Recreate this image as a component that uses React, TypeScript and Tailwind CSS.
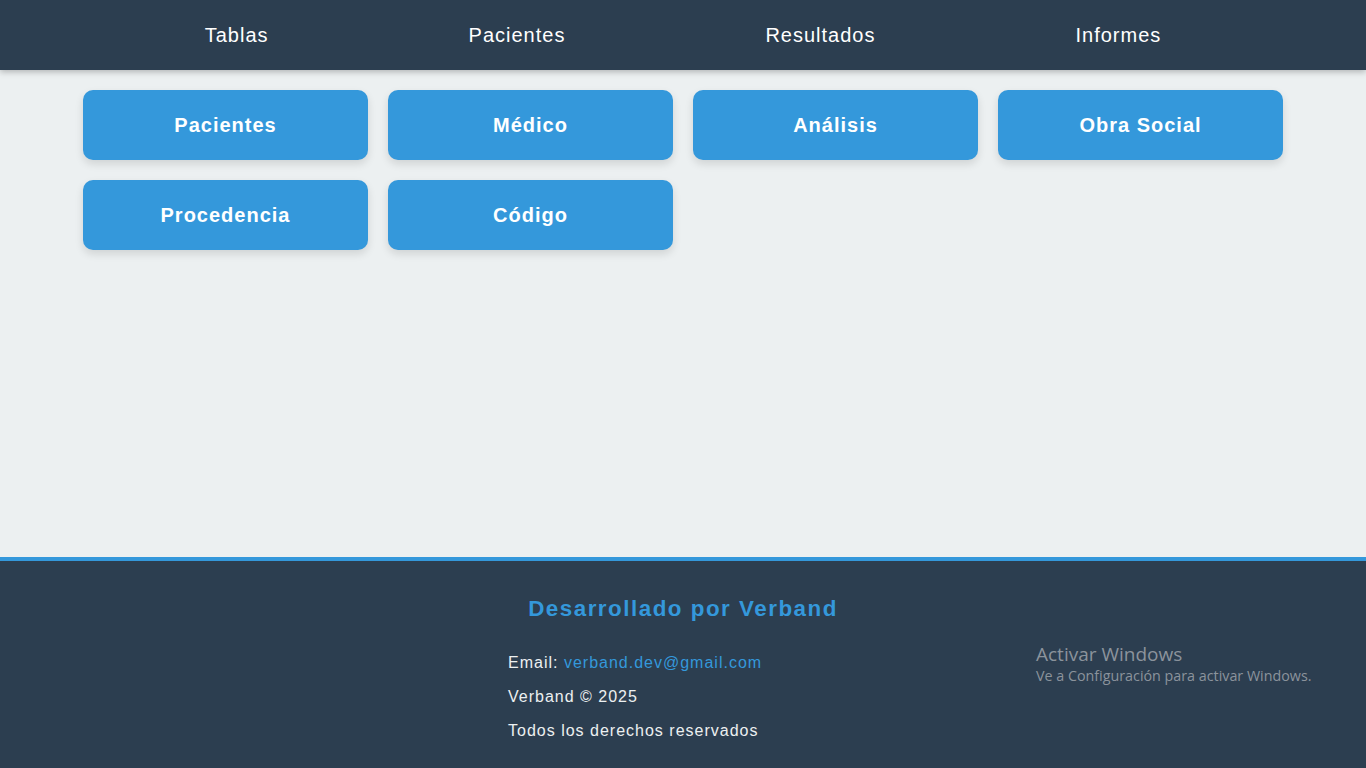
import React from 'react';

const navItems = ['Tablas', 'Pacientes', 'Resultados', 'Informes'];
const tablas = ['Pacientes', 'Médico', 'Análisis', 'Obra Social', 'Procedencia', 'Código'];

const App = () => {
  return (
    <div className="min-h-screen bg-[#ecf0f1] font-['Liberation_Sans',Arial,sans-serif] relative">
      <header className="h-[70px] bg-[#2c3e50] shadow-[0_2px_6px_rgba(0,0,0,0.25)] relative z-10">
        <ul className="h-full flex items-center justify-center gap-[200px]">
          {navItems.map((item) => (
            <li key={item}>
              <a href="#" className="text-white text-[20px] tracking-[1px]">
                {item}
              </a>
            </li>
          ))}
        </ul>
      </header>

      <main className="h-[487px] pt-5">
        <div className="max-w-[1200px] mx-auto grid grid-cols-4 gap-5">
          {tablas.map((t) => (
            <button
              key={t}
              className="h-[70px] rounded-[10px] bg-[#3498db] text-white text-[20px] font-bold tracking-[1px] shadow-[0_4px_8px_rgba(0,0,0,0.12)]"
            >
              {t}
            </button>
          ))}
        </div>
      </main>

      <footer className="h-[211px] bg-[#2c3e50] border-t-4 border-[#3498db] pt-[33px]">
        <h3 className="text-center text-[#3498db] text-[22.4px] leading-[30px] font-bold tracking-[1.5px] mb-[26px]">
          Desarrollado por Verband
        </h3>
        <div className="w-[350px] mx-auto text-[#ecf0f1] text-[16px] tracking-[1px]">
          <p className="leading-[26px] mb-2">
            Email: <a href="#" className="text-[#3498db]">verband.dev@gmail.com</a>
          </p>
          <p className="leading-[26px] mb-2">Verband © 2025</p>
          <p className="leading-[26px]">Todos los derechos reservados</p>
        </div>
      </footer>

      <div className="absolute left-[1036px] top-[642px] text-[#8b939c] font-['Open_Sans',sans-serif] pointer-events-none">
        <div className="text-[19px] leading-[24px]">Activar Windows</div>
        <div className="text-[14.3px] leading-[20px]">Ve a Configuración para activar Windows.</div>
      </div>
    </div>
  );
};

export default App;
